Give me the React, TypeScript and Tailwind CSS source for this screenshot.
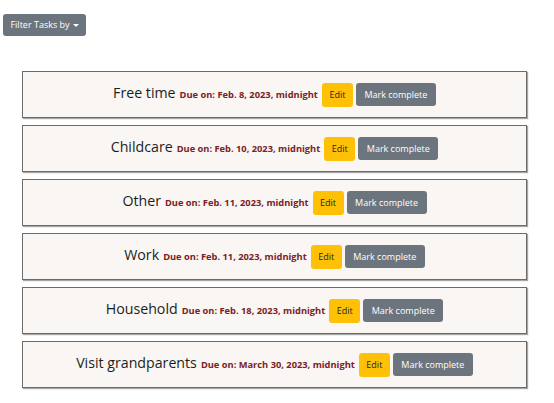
import React from 'react';

const tasks = [
  { title: 'Free time', due: 'Feb. 8, 2023, midnight' },
  { title: 'Childcare', due: 'Feb. 10, 2023, midnight' },
  { title: 'Other', due: 'Feb. 11, 2023, midnight' },
  { title: 'Work', due: 'Feb. 11, 2023, midnight' },
  { title: 'Household', due: 'Feb. 18, 2023, midnight' },
  { title: 'Visit grandparents', due: 'March 30, 2023, midnight' },
];

export default function App() {
  return (
    <div className="min-h-[403px] w-[554px] bg-white font-['Open_Sans',sans-serif] text-[#212529]">
      {/* Filter dropdown */}
      <div className="pl-[3px] pt-[14px]">
        <button className="flex h-[22px] w-[83px] items-center justify-center gap-[3px] rounded-[3px] bg-[#6c757d] text-[9px] text-white">
          Filter Tasks by
          <span className="mt-[1px] h-0 w-0 border-x-[3px] border-t-[3px] border-x-transparent border-t-white" />
        </button>
      </div>

      {/* Task list */}
      <div className="mt-[35px] flex flex-col gap-[7px] pl-[22px]">
        {tasks.map((t) => (
          <div
            key={t.title}
            className="flex h-[47px] w-[505px] items-center justify-center border border-[#6b6b6b] bg-[#faf6f3] shadow-[1px_1px_1px_rgba(0,0,0,0.35)]"
          >
            <span className="-mt-[2px] text-[14.2px] leading-none text-[#1b1e21]">{t.title}</span>
            <span className="ml-[4px] text-[9.3px] font-bold text-[#7a2224]">Due on: {t.due}</span>
            <button className="ml-[4px] h-[24px] w-[31px] rounded-[3px] bg-[#ffc107] text-[9px] text-[#212529]">
              Edit
            </button>
            <button className="ml-[3px] h-[23px] w-[80px] rounded-[3px] bg-[#6c757d] text-[9px] text-white">
              Mark complete
            </button>
          </div>
        ))}
      </div>
    </div>
  );
}
